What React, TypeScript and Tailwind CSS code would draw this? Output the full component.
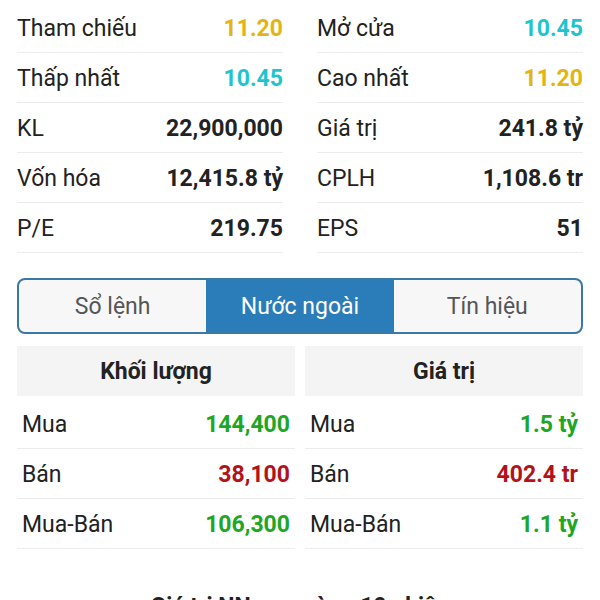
import React from "react";

const YELLOW = "text-[#e3b413]";
const CYAN = "text-[#1fc4cf]";
const GREEN = "text-[#1ea624]";
const RED = "text-[#b3121b]";

const overview: [string, string, string][][] = [
  [
    ["Tham chiếu", "11.20", YELLOW],
    ["Mở cửa", "10.45", CYAN],
  ],
  [
    ["Thấp nhất", "10.45", CYAN],
    ["Cao nhất", "11.20", YELLOW],
  ],
  [
    ["KL", "22,900,000", "text-[#222]"],
    ["Giá trị", "241.8 tỷ", "text-[#222]"],
  ],
  [
    ["Vốn hóa", "12,415.8 tỷ", "text-[#222]"],
    ["CPLH", "1,108.6 tr", "text-[#222]"],
  ],
  [
    ["P/E", "219.75", "text-[#222]"],
    ["EPS", "51", "text-[#222]"],
  ],
];

const foreign = [
  {
    title: "Khối lượng",
    rows: [
      ["Mua", "144,400", GREEN],
      ["Bán", "38,100", RED],
      ["Mua-Bán", "106,300", GREEN],
    ],
  },
  {
    title: "Giá trị",
    rows: [
      ["Mua", "1.5 tỷ", GREEN],
      ["Bán", "402.4 tr", RED],
      ["Mua-Bán", "1.1 tỷ", GREEN],
    ],
  },
];

const tabs = ["Sổ lệnh", "Nước ngoài", "Tín hiệu"];

export default function App() {
  return (
    <div className="w-[600px] h-[600px] overflow-hidden bg-white px-[17px] pt-[3px] font-['Roboto',sans-serif] text-[#222]">
      <div className="grid grid-cols-2 gap-x-[34px]">
        {overview.flat().map(([label, value, color], i) => (
          <div
            key={i}
            className="flex h-[50px] items-center justify-between border-b border-[#ececec] pt-[4px]"
          >
            <span className="text-[23px]">{label}</span>
            <span className={`text-[23px] font-bold ${color}`}>{value}</span>
          </div>
        ))}
      </div>

      <div className="mt-[25px] flex h-[56px] overflow-hidden rounded-lg border-2 border-[#3a78a6] bg-[#f7f7f7]">
        {tabs.map((t, i) => (
          <div
            key={t}
            className={
              i === 1
                ? "flex flex-1 items-center justify-center bg-[#2a7db9] pt-[3px] text-[23px] text-white"
                : "flex flex-1 items-center justify-center pt-[3px] text-[23px] text-[#555]"
            }
          >
            {t}
          </div>
        ))}
      </div>

      <div className="mt-[12px] grid grid-cols-2 gap-x-[10px]">
        {foreign.map((col) => (
          <div key={col.title}>
            <div className="flex h-[50px] items-center justify-center bg-[#f4f4f4] pt-[3px] text-[23px] font-bold">
              {col.title}
            </div>
            <div className="mt-[3px]">
              {col.rows.map(([label, value, color]) => (
                <div
                  key={label}
                  className="flex h-[50px] items-center justify-between border-b border-[#ececec] px-[5px] pt-[4px]"
                >
                  <span className="text-[23px]">{label}</span>
                  <span className={`text-[23px] font-bold ${color}`}>{value}</span>
                </div>
              ))}
            </div>
          </div>
        ))}
      </div>

      <div className="mt-[41px] text-center text-[23px] font-bold">
        Giá trị NN mua ròng 10 phiên
      </div>
    </div>
  );
}
